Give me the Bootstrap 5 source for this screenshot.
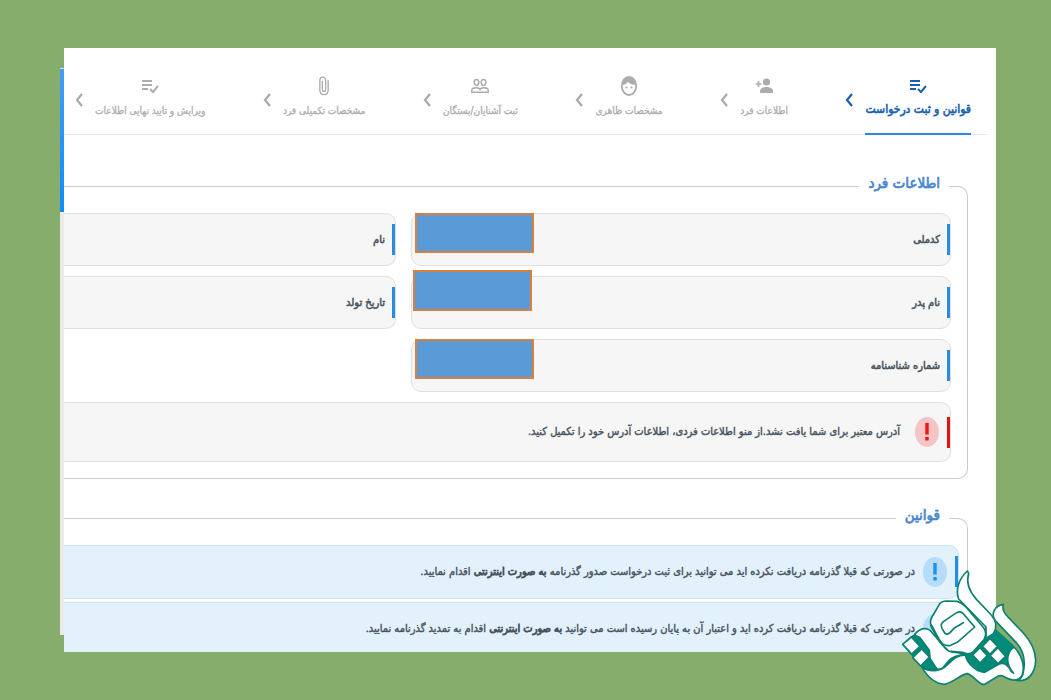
<!DOCTYPE html>
<html lang="fa" dir="rtl">
<head>
<meta charset="utf-8">
<meta name="viewport" content="width=device-width, initial-scale=1">
<title>قوانین و ثبت درخواست</title>
<link href="https://cdn.jsdelivr.net/npm/bootstrap@5.3.0/dist/css/bootstrap.min.css" rel="stylesheet">
<style>
body{background:#87ad6d;font-family:"DejaVu Sans Condensed","DejaVu Sans",sans-serif;font-stretch:condensed;color:#46525e;font-size:11px;line-height:20px}
.stage{min-height:100vh;padding:48px 55px 48px 64px}
.sheet{background:#fff;height:calc(100vh - 96px)}
.clip{overflow:hidden;height:100%}
.edge{left:-4px;top:20px;bottom:17px;width:4px;background:#ebe9e8}
.edge span{display:block;height:144px;background:linear-gradient(#459df5,#0f8cf8);border-top:1px solid #bfe6f5}
.steps{height:87px;margin-right:9px;padding:28px 16px 0 11px;border-bottom:1px solid #e6e6e6}
.step{color:#adadad;height:59px;text-decoration:none;white-space:nowrap;line-height:20px;font-size:10px;-webkit-text-stroke:.3px}
.step svg{width:20px;height:20px;margin-bottom:5px}
.step.active{color:#1a5fb4;border-bottom:2px solid #2a8be0;font-size:12px;-webkit-text-stroke:.6px}
.step.active svg{margin-bottom:3px}
.chev{width:8px;height:14px;margin-top:17px;color:#aaa}
.chev.on{color:#1a5fb4}
.panel{border:1px solid #ccc;border-left:0;border-radius:0 10px 10px 0;margin-right:28px;padding:0 0 16px;min-width:0}
.panel legend{float:none;width:auto;font-size:15px;line-height:24px;color:#4a86d0;-webkit-text-stroke:.7px;margin:0 18px 0 0;padding:0 9px 6px}
.first{margin-top:36px}
.second{margin-top:24px;padding-bottom:40px}
.fields{display:grid;grid-template-columns:540fr 332fr;gap:10px 15px;margin-right:16px}
.field{height:53px;border:1px solid #e0e0e0;border-radius:10px;background:#f6f6f6;padding:0 10px;-webkit-text-stroke:.5px}
.field::before,.note::before{content:"";position:absolute;right:0;top:10px;height:31px;width:3px;background:#2a8be0}
.wide{border-left:0;border-radius:0 10px 10px 0}
.cover{position:absolute;left:3px;top:-1px;width:119px;height:40px;background:#5a9ad6;border:2px solid #d87f42}
.cover.up{left:1px;top:-7px;height:41px}
.note{border:1px solid #e0e0e0;border-left:0;border-radius:0 10px 10px 0;background:#f6f6f6;height:60px;padding-right:11px;white-space:nowrap;-webkit-text-stroke:.4px}
.note b{font-weight:normal;-webkit-text-stroke:.8px}
.note.warn{margin:10px 16px 0 0}
.note.warn::before{background:#e01414;top:14px}
.note.info{background:#e2f1fc;border-color:#c9e3f2;height:54px;margin:0 8px 3px 0}
.note.info::before{background:#2090f0}
.mark-i{width:24px;height:30px;flex:none}
.mark-s{margin-left:8px}
.mark-l{margin-left:15px}
.tone-red{color:#f01414}
.tone-blue{color:#1d90f5}
.logo{right:13px;bottom:13px;width:138px;height:118px}
</style>
</head>
<body>
<svg class="d-none" xmlns="http://www.w3.org/2000/svg">
<symbol id="list" viewBox="0 0 20 20"><path fill="none" stroke="currentColor" stroke-width="2" d="M2 5h10M2 9h10M2 13h6M10 13l3 3 5-6"/></symbol>
<symbol id="add" viewBox="0 0 20 20"><circle cx="12.500" cy="6" r="3.600" fill="currentColor"/><path fill="currentColor" d="M6 17v-2c0-3 4-4 6.500-4S19 12 19 15v2z"/><path stroke="currentColor" stroke-width="1.700" d="M1.500 8h6M4.500 5v6"/></symbol>
<symbol id="face" viewBox="0 0 20 20"><ellipse cx="10" cy="10" rx="7.200" ry="9" fill="none" stroke="currentColor" stroke-width="1.800"/><path fill="currentColor" d="M3 9C3 3 6 1 10 1s7 3 7 8c-4 0-6-1-8-3-2 2-3 3-6 3z"/><circle cx="7.500" cy="11.500" r="1.100" fill="currentColor"/><circle cx="12.500" cy="11.500" r="1.100" fill="currentColor"/></symbol>
<symbol id="people" viewBox="0 0 20 20"><g fill="none" stroke="currentColor" stroke-width="1.500"><ellipse cx="6.500" cy="6.500" rx="2.300" ry="2.900"/><ellipse cx="13.500" cy="6.500" rx="2.300" ry="2.900"/><path d="M1.800 16.200v-2c0-1.600 2.400-2.400 4.400-2.400s3.800.8 3.800 2.400c0-1.600 2-2.400 4-2.400s4.200.8 4.200 2.400v2z"/></g></symbol>
<symbol id="clip" viewBox="0 0 20 24"><path fill="none" stroke="currentColor" stroke-width="1.600" d="M15 5v12c0 7-10 7-10 0V5c0-5 7-5 7 0v11c0 3.500-4 3.500-4 0V6"/></symbol>
<symbol id="chev" viewBox="0 0 8 14"><path fill="none" stroke="currentColor" stroke-width="2.200" d="M7 1 2 7l5 6"/></symbol>
<symbol id="bang" viewBox="0 0 24 30"><ellipse cx="12" cy="15" rx="12" ry="15" opacity=".22" fill="currentColor"/><path fill="currentColor" d="M10.300 6h3.400v11.500h-3.400zM10.300 20h3.400v3.500h-3.400z"/></symbol>
</svg>
<div class="stage position-relative">
<main class="sheet position-relative">
<div class="edge position-absolute"><span></span></div>
<div class="clip">
<nav class="steps d-flex justify-content-between" aria-label="مراحل">
<div class="d-flex gap-2"><a href="#" class="step active d-flex flex-column align-items-center"><svg><use href="#list"/></svg><span>قوانین و ثبت درخواست</span></a><svg class="chev on me-1"><use href="#chev"/></svg></div>
<div class="d-flex gap-2"><a href="#" class="step d-flex flex-column align-items-center"><svg><use href="#add"/></svg><span>اطلاعات فرد</span></a><svg class="chev me-1"><use href="#chev"/></svg></div>
<div class="d-flex gap-2"><a href="#" class="step d-flex flex-column align-items-center"><svg><use href="#face"/></svg><span>مشخصات ظاهری</span></a><svg class="chev me-1"><use href="#chev"/></svg></div>
<div class="d-flex gap-2"><a href="#" class="step d-flex flex-column align-items-center"><svg><use href="#people"/></svg><span>ثبت آشنایان/بستگان</span></a><svg class="chev me-1"><use href="#chev"/></svg></div>
<div class="d-flex gap-2"><a href="#" class="step d-flex flex-column align-items-center"><svg><use href="#clip"/></svg><span>مشخصات تکمیلی فرد</span></a><svg class="chev me-1"><use href="#chev"/></svg></div>
<div class="d-flex gap-2"><a href="#" class="step d-flex flex-column align-items-center"><svg><use href="#list"/></svg><span>ویرایش و تایید نهایی اطلاعات</span></a><svg class="chev me-1"><use href="#chev"/></svg></div>
</nav>
<fieldset class="panel first">
<legend>اطلاعات فرد</legend>
<div class="fields pt-2 mt-1">
<div class="field position-relative d-flex align-items-center">کدملی<span class="cover"></span></div>
<div class="field wide position-relative d-flex align-items-center">نام</div>
<div class="field position-relative d-flex align-items-center">نام پدر<span class="cover up"></span></div>
<div class="field wide position-relative d-flex align-items-center">تاریخ تولد</div>
<div class="field position-relative d-flex align-items-center">شماره شناسنامه<span class="cover"></span></div>
</div>
<div class="note warn position-relative d-flex align-items-center"><svg class="mark-i mark-l tone-red"><use href="#bang"/></svg><span>آدرس معتبر برای شما یافت نشد.از منو اطلاعات فردی، اطلاعات آدرس خود را تکمیل کنید.</span></div>
</fieldset>
<fieldset class="panel second">
<legend>قوانین</legend>
<div class="pt-2 mt-1">
<div class="note info position-relative d-flex align-items-center"><svg class="mark-i mark-s tone-blue"><use href="#bang"/></svg><span>در صورتی که قبلا گذرنامه دریافت نکرده اید می توانید برای ثبت درخواست صدور گذرنامه <b>به صورت اینترنتی</b> اقدام نمایید.</span></div>
<div class="note info position-relative d-flex align-items-center"><svg class="mark-i mark-s tone-blue"><use href="#bang"/></svg><span>در صورتی که قبلا گذرنامه دریافت کرده اید و اعتبار آن به پایان رسیده است می توانید <b>به صورت اینترنتی</b> اقدام به تمدید گذرنامه نمایید.</span></div>
</div>
</fieldset>
</div>
</main>
<svg class="logo position-absolute" viewBox="61 42 412 354" role="img" aria-label="نشان">
<g stroke="#0b8170" stroke-width="5" stroke-linejoin="round" stroke-linecap="round" fill="#fff">
<path fill="#008a78" stroke="none" d="M66 268 110 232 160 240 340 215 400 270 424 350 390 350 312 360 265 320 180 350 126 338z"/>
<path d="M370 148C342 152 333 178 345 196L408 262C436 292 436 330 428 360 422 374 414 378 410 376 446 382 466 352 467 316 466 280 450 256 430 234L384 186C370 172 366 162 370 148z"/>
<path d="M262 48C236 72 226 104 236 132L318 216 318 250 340 236C354 214 348 196 334 180L290 134C268 110 258 82 266 55z"/>
<path d="M104 238Q128 212 150 226L196 280Q208 292 228 292L250 296 236 302Q214 306 202 322L188 340Q178 346 166 340L148 318 136 284z"/>
<path d="M178 148Q184 138 200 138L232 139Q248 144 258 156L312 220Q322 236 312 254L280 290Q266 302 248 292L206 288 182 264 154 216Q148 200 156 186z"/>
<path fill="none" d="M284 216 250 176Q242 167 230 173L190 200Q180 208 186 220L194 234Q202 241 210 233L222 220 250 203M154 210 178 254Q190 276 212 271L232 262 284 216"/>
<path fill="#008a78" d="M94 246Q106 238 120 248L148 286 150 310 172 344 138 344 120 330z"/>
<path d="M68 268 94 246 120 274 95 297zM98 308 125 282 148 306 122 333z"/>
<path d="M126 338 140 344C160 350 182 346 194 336 212 322 226 300 256 300 262 326 288 350 314 352L356 328C374 320 386 332 394 350L400 354C376 326 378 292 402 276 426 300 436 336 426 362 414 380 392 378 374 366Q360 358 350 366L312 389C292 386 282 362 262 356 238 360 220 384 192 388 162 386 142 364 126 338z"/>
<path d="M278 300 300 278 322 302 300 324zM307 274 330 250 353 274 330 298zM330 302 354 278 377 304 354 326z"/>
</g>
</svg>
</div>
<script src="https://cdn.jsdelivr.net/npm/bootstrap@5.3.0/dist/js/bootstrap.bundle.min.js"></script>
</body>
</html>
